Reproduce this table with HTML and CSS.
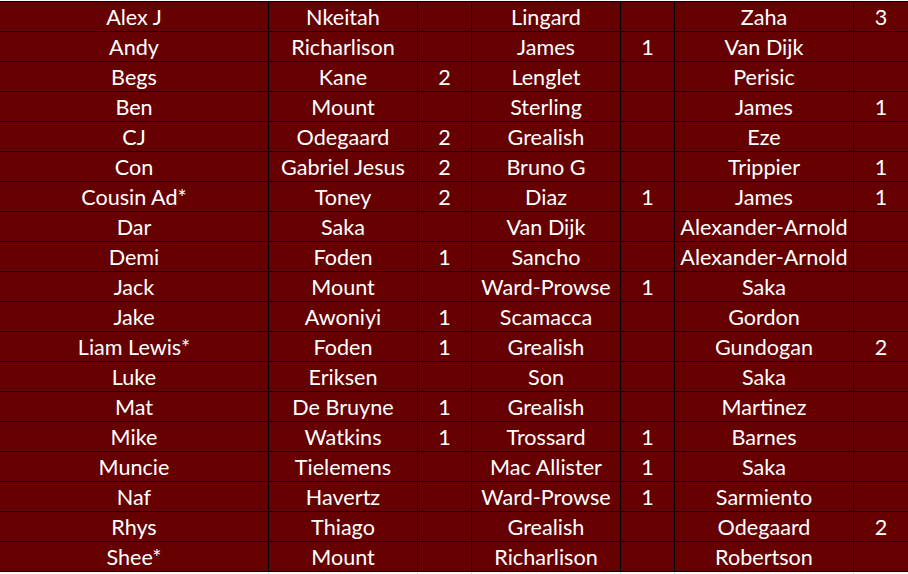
FILE: index.html
```html
<!DOCTYPE html>
<html>
<head>
<meta charset="utf-8">
<link rel="stylesheet" href="styles.css">
</head>
<body>
<div class="sheet">
<div class="c">Alex J</div><div class="c">Nkeitah</div><div class="c"></div><div class="c">Lingard</div><div class="c"></div><div class="c">Zaha</div><div class="c">3</div>
<div class="c">Andy</div><div class="c">Richarlison</div><div class="c"></div><div class="c">James</div><div class="c">1</div><div class="c">Van Dijk</div><div class="c"></div>
<div class="c">Begs</div><div class="c">Kane</div><div class="c">2</div><div class="c">Lenglet</div><div class="c"></div><div class="c">Perisic</div><div class="c"></div>
<div class="c">Ben</div><div class="c">Mount</div><div class="c"></div><div class="c">Sterling</div><div class="c"></div><div class="c">James</div><div class="c">1</div>
<div class="c">CJ</div><div class="c">Odegaard</div><div class="c">2</div><div class="c">Grealish</div><div class="c"></div><div class="c">Eze</div><div class="c"></div>
<div class="c">Con</div><div class="c">Gabriel Jesus</div><div class="c">2</div><div class="c">Bruno G</div><div class="c"></div><div class="c">Trippier</div><div class="c">1</div>
<div class="c">Cousin Ad*</div><div class="c">Toney</div><div class="c">2</div><div class="c">Diaz</div><div class="c">1</div><div class="c">James</div><div class="c">1</div>
<div class="c">Dar</div><div class="c">Saka</div><div class="c"></div><div class="c">Van Dijk</div><div class="c"></div><div class="c">Alexander-Arnold</div><div class="c"></div>
<div class="c">Demi</div><div class="c">Foden</div><div class="c">1</div><div class="c">Sancho</div><div class="c"></div><div class="c">Alexander-Arnold</div><div class="c"></div>
<div class="c">Jack</div><div class="c">Mount</div><div class="c"></div><div class="c">Ward-Prowse</div><div class="c">1</div><div class="c">Saka</div><div class="c"></div>
<div class="c">Jake</div><div class="c">Awoniyi</div><div class="c">1</div><div class="c">Scamacca</div><div class="c"></div><div class="c">Gordon</div><div class="c"></div>
<div class="c">Liam Lewis*</div><div class="c">Foden</div><div class="c">1</div><div class="c">Grealish</div><div class="c"></div><div class="c">Gundogan</div><div class="c">2</div>
<div class="c">Luke</div><div class="c">Eriksen</div><div class="c"></div><div class="c">Son</div><div class="c"></div><div class="c">Saka</div><div class="c"></div>
<div class="c">Mat</div><div class="c">De Bruyne</div><div class="c">1</div><div class="c">Grealish</div><div class="c"></div><div class="c">Martinez</div><div class="c"></div>
<div class="c">Mike</div><div class="c">Watkins</div><div class="c">1</div><div class="c">Trossard</div><div class="c">1</div><div class="c">Barnes</div><div class="c"></div>
<div class="c">Muncie</div><div class="c">Tielemens</div><div class="c"></div><div class="c">Mac Allister</div><div class="c">1</div><div class="c">Saka</div><div class="c"></div>
<div class="c">Naf</div><div class="c">Havertz</div><div class="c"></div><div class="c">Ward-Prowse</div><div class="c">1</div><div class="c">Sarmiento</div><div class="c"></div>
<div class="c">Rhys</div><div class="c">Thiago</div><div class="c"></div><div class="c">Grealish</div><div class="c"></div><div class="c">Odegaard</div><div class="c">2</div>
<div class="c">Shee*</div><div class="c">Mount</div><div class="c"></div><div class="c">Richarlison</div><div class="c"></div><div class="c">Robertson</div><div class="c"></div>
</div>
<div class="grid-below">
<div class="e"></div><div class="e"></div><div class="e"></div><div class="e"></div><div class="e"></div><div class="e"></div><div class="e"></div>
</div>
</body>
</html>
```
FILE: styles.css
```css
html, body {
  margin: 0;
  padding: 0;
  background: #ffffff;
  overflow: hidden;
}
body {
  padding-top: 1px;
}
.sheet {
  display: grid;
  grid-template-columns: 268px 148px 53px 148px 53px 178px 54px;
  grid-auto-rows: 29px;
  gap: 1px;
  padding: 1px;
  background: #000000;
  margin-left: -1px;
  width: max-content;
}
.c {
  background: #660000;
  color: #ffffff;
  font-family: Lato, "Liberation Sans", sans-serif;
  font-size: 21.6px;
  line-height: 30px;
  text-align: center;
  white-space: nowrap;
  overflow: hidden;
}
.grid-below {
  display: grid;
  grid-template-columns: 268px 148px 53px 148px 53px 178px 54px;
  grid-auto-rows: 10px;
  column-gap: 1px;
  padding: 0 1px;
  background: #dadada;
  margin-left: -1px;
  width: max-content;
}
.e {
  background: #ffffff;
}
```
